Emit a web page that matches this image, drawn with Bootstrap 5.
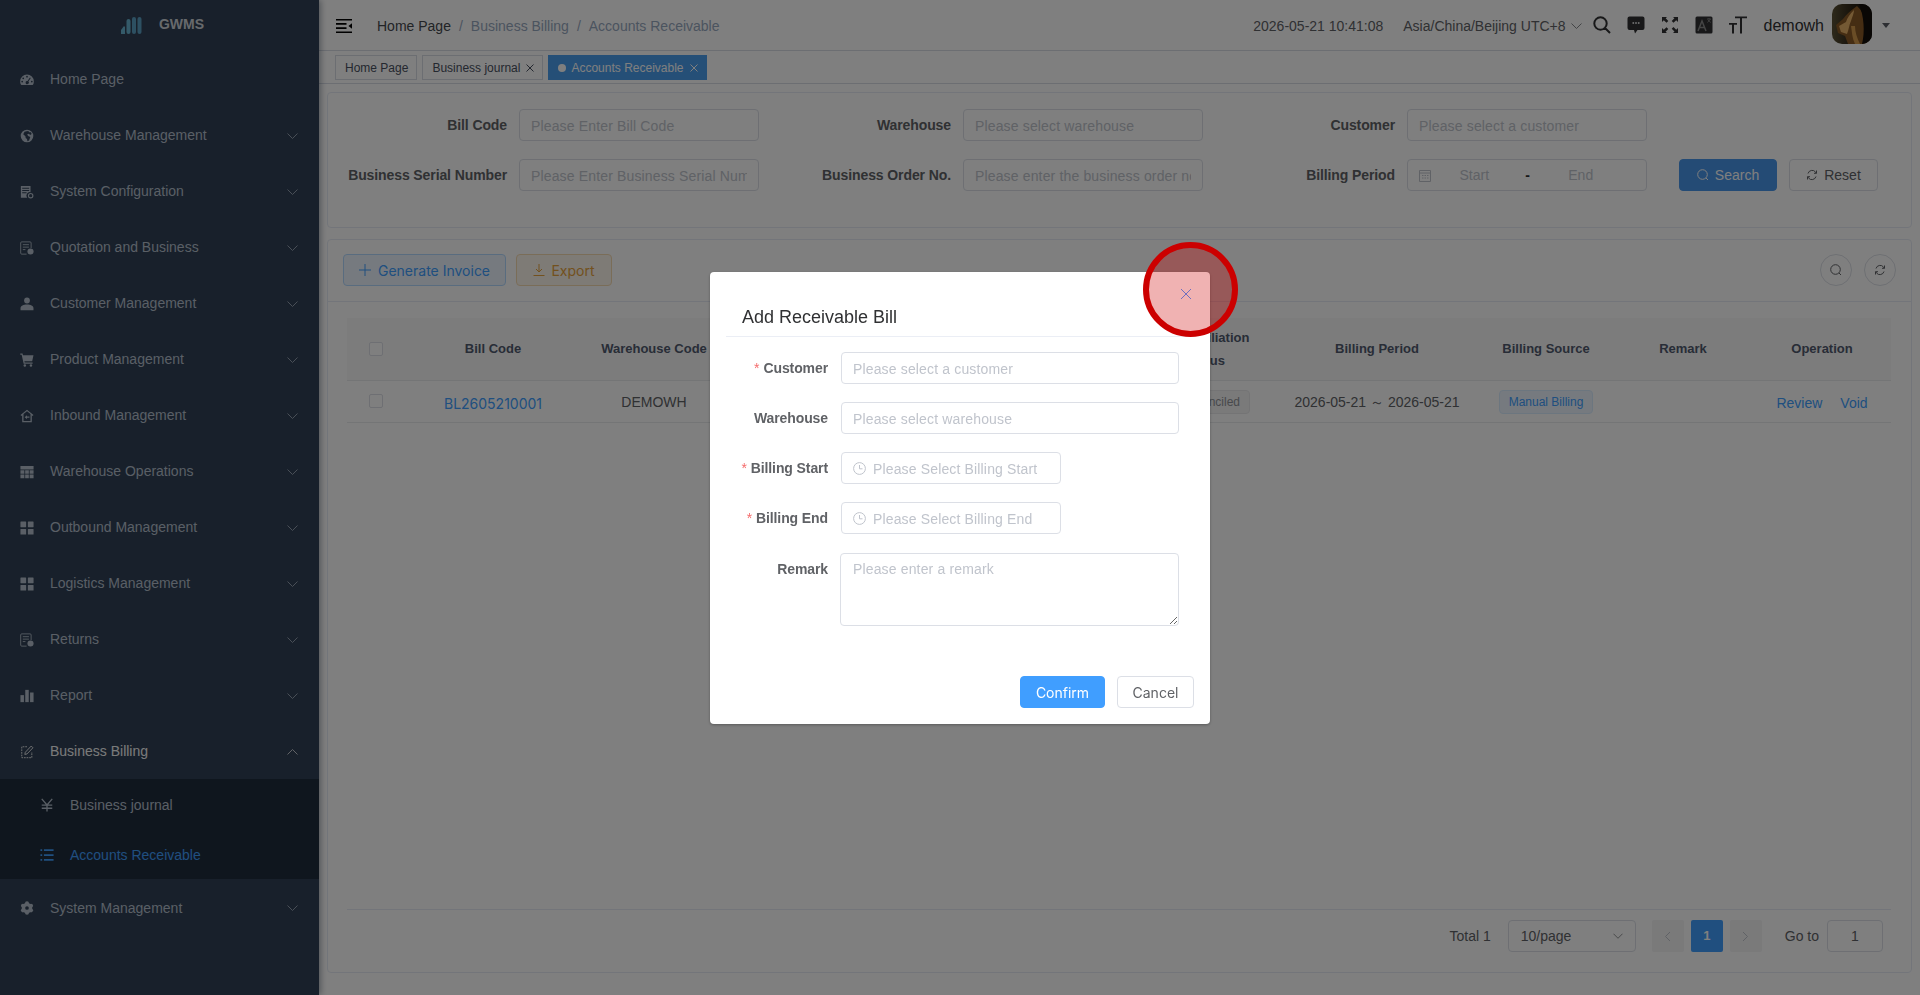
<!DOCTYPE html>
<html lang="en">
<head>
    <meta charset="UTF-8">
    <meta name="viewport" content="width=device-width, initial-scale=1.0">
    <title>GWMS - Accounts Receivable</title>
    <link href="https://cdn.jsdelivr.net/npm/bootstrap@5.3.0/dist/css/bootstrap.min.css" rel="stylesheet">
    <style>
        body { height: 100vh; overflow: hidden; font-family: "Liberation Sans", Arial, sans-serif; font-size: 14px; color: #606266; background: #fff; }
        .ic { width: 14px; height: 14px; fill: currentColor; flex: none; }
        .inter { font-family: Inter, "Liberation Sans", sans-serif; }

        /* sidebar */
        .side { width: 319px; flex: none; background: #304156; box-shadow: 2px 0 6px rgba(0, 21, 41, .35); position: relative; z-index: 2; color: #b4bfcc; }
        .side-logo { height: 51px; padding: 0 0 2px 5px; color: #cfd4da; font-size: 14px; font-weight: 600; gap: 17px; }
        .side-logo svg { width: 22px; height: 18px; }
        .side .nav-link { height: 56px; padding: 1px 21px 0 20px; gap: 16px; color: #b4bfcc; }
        .side .nav-link.open { color: #f4f4f5; }
        .side .sub { background: #1f2d3d; }
        .side .sub .nav-link { height: 50px; padding: 2px 21px 0 40px; }
        .side .sub .nav-link.active { color: #409eff; }
        .side .sub + .nav-link { padding-top: 2px; }
        .chev { width: 11px; height: 6px; margin-left: auto; fill: none; stroke: currentColor; stroke-width: 1; opacity: .75; }
        .chev.up { transform: rotate(180deg); }

        /* top bars */
        .topbar { height: 51px; border-bottom: 1px solid #d8dce5; padding: 2px 0 0 17px; }
        .hamb { width: 16px; height: 14px; fill: #000; margin-right: 25px; }
        .crumb { margin: 0; color: #97a8be; }
        .crumb .breadcrumb-item { line-height: 14px; height: 15px; overflow: hidden; }
        .crumb .breadcrumb-item + .breadcrumb-item { padding-left: 8px; }
        .crumb .breadcrumb-item + .breadcrumb-item::before { padding-right: 8px; color: #97a8be; }
        .crumb .first { color: #45484d; }
        .tools { gap: 16px; margin-top: -2px; }
        .tool { width: 18px; height: 18px; fill: #303133; }
        .avatar { width: 40px; height: 40px; border-radius: 10px; margin-top: -4px; }
        .caret-d { width: 0; height: 0; border: 4px solid transparent; border-top: 5px solid #5a5e66; border-bottom: 0; margin: -2px 30px 0 10px; }
        .tagbar { border-bottom: 1px solid #d8dce5; padding: 4px 0 0 16px; gap: 5px; box-sizing: content-box; height: 28px; }
        .vtag { height: 25px; padding: 0 8px 0 9px; border: 1px solid #d8dce5; color: #495060; font-size: 12px; gap: 6px; background: #fff; }
        .vtag svg { width: 8px; height: 8px; stroke: currentColor; stroke-width: 1; fill: none; }
        .vtag.on { background: #4a9eee; border-color: #4a9eee; color: #fff; }
        .vtag .dot { width: 8px; height: 8px; border-radius: 50%; background: #fff; margin-right: -1px; }

        /* cards */
        .wrap { padding: 8px 8px 22px; gap: 11px; flex: 1; min-height: 0; }
        .panel { border: 1px solid #e6ebf5; border-radius: 4px; background: #fff; }
        .filters { display: grid; grid-template-columns: 179px 240px 180px 240px 180px 240px auto; column-gap: 12px; row-gap: 18px; height: 136px; padding-top: 16px; align-content: start; align-items: center; }
        .filters label, .dlg-row label { font-weight: 700; color: #606266; text-align: right; letter-spacing: -.1px; padding-top: 1px; }
        .form-control { height: 32px; min-height: 32px; padding: 1px 11px 0; font-size: 14px; color: #606266; border: 1px solid #dcdfe6; border-radius: 4px; box-shadow: none; }
        .form-control::placeholder { color: #c0c4cc; opacity: 1; letter-spacing: .15px; }
        .range { height: 32px; border: 1px solid #dcdfe6; border-radius: 4px; color: #c0c4cc; padding: 0 22px 0 11px; }
        .range svg { width: 12px; height: 13px; fill: none; stroke: #c0c4cc; flex: none; }
        .range span { text-align: center; }
        .range .dash { color: #303133; width: 20px; font-weight: 700; flex: none; }
        .range .part { flex: 1 1 0; }
        .btn-el { height: 32px; padding: 0; font-size: 14px; border-radius: 4px; gap: 6px; display: inline-flex; align-items: center; justify-content: center; white-space: nowrap; }
        .btn-el svg { width: 12px; height: 12px; fill: none; stroke: currentColor; stroke-width: 1; }
        .btn-search { background: #4896ea; color: #fff; border: 1px solid #4896ea; width: 98px; }
        .btn-plain { background: #fff; color: #606266; border: 1px solid #dcdfe6; }
        .btn-blue { background: #ecf5ff; color: #409eff; border: 1px solid #b3d8ff; width: 163px; gap: 7px; }
        .btn-orange { background: #fdf6ec; color: #e6a23c; border: 1px solid #f5dab1; width: 96px; margin-left: 10px; }
        .btn-round { width: 32px; height: 32px; border-radius: 50%; padding: 0; color: #606266; }
        .toolbar { padding: 14px 15px 15px; border-bottom: 1px solid #e6ebf5; }

        /* table */
        .tbl-wrap { margin: 16px 20px 0 19px; }
        .table { table-layout: fixed; width: 1544px; margin: 0; font-size: 14px; color: #606266; }
        .table th { height: 62px; background: #f8f8f9; color: #515a6e; font-size: 13px; font-weight: 700; text-align: center; vertical-align: middle; line-height: 23px; padding: 0 8px; border-bottom: 1px solid #e8eaec; }
        .table td { height: 42px; text-align: center; vertical-align: middle; padding: 2px 8px 0; border-bottom: 1px solid #e8eaec; }
        .table th:first-child, .table td:first-child { padding: 0 8px; }
        .check { display: block; width: 14px; height: 14px; border: 1px solid #dcdfe6; border-radius: 2px; background: #fff; margin: 0 0 0 14px; }
        .lk { color: #409eff; text-decoration: none; display: inline-block; margin-top: 3px; }
        .void { margin-left: 18px; }
        .tg { display: inline-block; height: 24px; line-height: 22px; padding: 0 9px; font-size: 12px; border-radius: 4px; border: 1px solid; }
        .tg-gray { background: #f4f4f5; border-color: #e9e9eb; color: #909399; }
        .tg-blue { background: #ecf5ff; border-color: #d9ecff; color: #409eff; }

        /* pagination */
        .pager { margin: auto 20px 0 19px; height: 63px; border-top: 1px solid #e6ebf5; padding: 10px 8px 0 0; color: #606266; }
        .pager .sel { width: 128px; height: 32px; border: 1px solid #dcdfe6; border-radius: 4px; padding: 0 12px; margin: 0 16px 0 17px; }
        .pager .sel .chev { width: 10px; }
        .pager .lh { line-height: 32px; }
        .pager .pagination { gap: 8px; margin: 0 23px 0 0; }
        .pager .page-link { width: 32px; height: 32px; padding: 0; display: flex; align-items: center; justify-content: center; border: 0; border-radius: 2px !important; background: #f4f4f5; color: #c0c4cc; font-size: 13px; }
        .pager .active .page-link { background: #409eff; color: #fff; font-weight: 700; }
        .pager .page-link svg { width: 7px; height: 11px; fill: none; stroke: currentColor; }
        .pager .go { width: 56px; text-align: center; margin-left: 8px; padding: 0; border-color: #dcdfe6; }

        /* dialog */
        .modal-backdrop { background: #000; }
        .dlg.modal-dialog { width: 500px; max-width: 500px; margin: 272px auto 0; }
        .dlg .modal-content { height: 452px; border: 0; border-radius: 4px; box-shadow: 0 1px 3px rgba(0, 0, 0, .3); display: block; }
        .dlg .modal-header { height: 65px; margin: 0 16px; padding: 0 0 7px 16px; align-items: flex-end; border-bottom: 1px solid #ebeef5; border-radius: 0; }
        .dlg .modal-title { font-size: 18px; line-height: 24px; color: #303133; font-weight: 400; }
        .dlg-close { position: absolute; top: 16px; right: 18px; width: 12px; height: 12px; padding: 0; border: 0; background: none; display: flex; z-index: 2; }
        .dlg-close svg { width: 12px; height: 12px; stroke: #6f6fc0; fill: none; }
        .dlg-row { display: grid; grid-template-columns: 118px 338px; column-gap: 13px; height: 32px; align-items: center; margin-bottom: 18px; }
        .dlg-row label i { color: #f56c6c; font-style: normal; font-weight: 400; margin-right: 4px; }
        .dlg-body { padding: 15px 0 0 0; }
        .date-in { position: relative; width: 220px; }
        .date-in .form-control { padding-left: 31px; }
        .date-in svg { position: absolute; left: 12px; top: 10px; width: 13px; height: 13px; fill: none; stroke: #c0c4cc; }
        .dlg-row.area { height: 73px; align-items: start; margin: 19px 0 0; }
        .dlg-row.area label { padding-top: 6px; }
        .dlg-row.area textarea { height: 73px; width: 339px; margin-left: -1px; padding: 5px 12px; }
        .dlg-foot { gap: 12px; padding: 50px 16px 0 0; }
        .btn-confirm { background: #409eff; border: 1px solid #409eff; color: #fff; width: 85px; }
        .btn-cancel { background: #fff; border: 1px solid #dcdfe6; color: #606266; width: 77px; }
        .hint-ring { position: absolute; left: 433px; top: -30px; width: 95px; height: 95px; border: 6px solid #c00; border-radius: 50%; background: rgba(204, 0, 0, .3); pointer-events: none; }
    </style>
</head>
<body class="d-flex">
    <svg width="0" height="0" class="position-absolute">
        <symbol id="i-home" viewBox="0 0 16 16"><path fill-rule="evenodd" d="M8 1.8A7.8 7.8 0 0 0 .2 9.6c0 1.6.4 3 1.1 3.9a.8.8 0 0 0 .6.3h12.2a.8.8 0 0 0 .6-.3c.7-.9 1.100-2.300 1.100-3.900A7.800 7.800 0 0 0 8 1.800zM8 3.200a1 1 0 1 1 0 2 1 1 0 0 1 0-2zM3.700 5a1 1 0 1 1 0 2 1 1 0 0 1 0-2zM2.500 8.800a1 1 0 1 1 0 2 1 1 0 0 1 0-2zM13.500 8.800a1 1 0 1 1 0 2 1 1 0 0 1 0-2zM11.400 5.200l.9.600-2.700 4a1.800 1.800 0 1 1-1-.600z"/></symbol>
        <symbol id="i-globe" viewBox="0 0 16 16"><path fill-rule="evenodd" d="M8 .8a7.200 7.200 0 1 0 0 14.400A7.200 7.200 0 0 0 8 .8zM9.500 2.300l1 1.300 2 .2.800 2-1.700 1-1.400-1.300-2 .4 1 2.200 2.600 1-1.500 4-1.800.8-.5-2.600-1.500-1-.3-2-2.500-2.200 1.500-3 2.300-.6z"/></symbol>
        <symbol id="i-config" viewBox="0 0 16 16"><path fill-rule="evenodd" d="M1 1h11v7.200a4 4 0 0 0-3.900 6.300H1zM2.500 3v1.200h8V3zm0 2.600v1.200h8V5.600zm0 2.600v1.200h5V8.200z"/><circle cx="12.200" cy="12.200" r="2.500" fill="none" stroke="currentColor" stroke-width="1.300"/></symbol>
        <symbol id="i-quote" viewBox="0 0 16 16"><g fill="none" stroke="currentColor"><path d="M7.500 15H2a1.200 1.200 0 0 1-1.200-1.200V2.200A1.200 1.200 0 0 1 2 1h9.500a1.200 1.200 0 0 1 1.200 1.200V8"/><path d="M3.200 4.200h7M3.200 7h7M3.200 9.800h3"/></g><circle cx="12" cy="12" r="3.500"/></symbol>
        <symbol id="i-user" viewBox="0 0 16 16"><circle cx="8" cy="4" r="3.300"/><path d="M.6 15v-2.500c0-2.400 3.400-4 7.400-4s7.400 1.600 7.400 4V15z"/></symbol>
        <symbol id="i-cart" viewBox="0 0 16 16"><path d="M.3.500h2.600l.5 2h12l-1.500 6.800H5l.4 1.600h9v1.400H4.200L1.900 1.900H.3z"/><circle cx="5.500" cy="14.300" r="1.400"/><circle cx="12.500" cy="14.300" r="1.400"/></symbol>
        <symbol id="i-in" viewBox="0 0 16 16"><path d="M8 .8.600 6.900l.9 1L2.500 7v8h11V7l1 .9.900-1zM12 13.600H4V5.800l4-3.300 4 3.300z"/><path d="M5.300 9.300 8 7.200v1.400h2.800v1.500H8v1.400z"/></symbol>
        <symbol id="i-table" viewBox="0 0 16 16"><path fill-rule="evenodd" d="M.5 1h15v14H.5zM.5 5v.9h4.500V10H.5v.8h4.500V15h.9v-4.200h4.200V15h.9v-4.200h4.500V10h-4.500V5.900h4.500V5zM5.900 5.900h4.200V10H5.900z"/></symbol>
        <symbol id="i-grid" viewBox="0 0 16 16"><rect x=".5" y=".5" width="6.500" height="6.500" rx=".5"/><rect x="9" y=".5" width="6.500" height="6.500" rx=".5"/><rect x=".5" y="9" width="6.500" height="6.500" rx=".5"/><rect x="9" y="9" width="6.500" height="6.500" rx=".5"/></symbol>
        <symbol id="i-bars" viewBox="0 0 16 16"><rect x=".5" y="7" width="4" height="8"/><rect x="6" y="1" width="4" height="14"/><rect x="11.500" y="4" width="4" height="11"/></symbol>
        <symbol id="i-bill" viewBox="0 0 16 16"><g fill="none" stroke="currentColor"><path d="M8 2H2v12.500h11.500V8" stroke-dasharray="2 1"/><path d="m12.800 1.200 2 2-6.800 7-2.500.6.600-2.500z"/></g></symbol>
        <symbol id="i-yen" viewBox="0 0 16 16"><path fill="none" stroke="currentColor" stroke-width="1.500" d="M2 1l6 7 6-7M8 8v7.500M2 8.200h12M2 11.700h12"/></symbol>
        <symbol id="i-list" viewBox="0 0 16 16"><path d="M.5 1.500h2v2h-2zM4.500 1.500h11v2h-11zM.5 7h2v2h-2zM4.500 7h11v2h-11zM.5 12.500h2v2h-2zM4.500 12.500h11v2h-11z"/></symbol>
        <symbol id="i-gear" viewBox="0 0 16 16"><circle cx="8" cy="8" r="4" fill="none" stroke="currentColor" stroke-width="3.800"/><circle cx="8" cy="2.700" r="2.300"/><circle cx="8" cy="13.300" r="2.300"/><circle cx="3.400" cy="5.300" r="2.300"/><circle cx="12.600" cy="5.300" r="2.300"/><circle cx="3.400" cy="10.700" r="2.300"/><circle cx="12.600" cy="10.700" r="2.300"/></symbol>
        <symbol id="i-chev" viewBox="0 0 11 6"><path d="M.5.500 5.500 5.500 10.500.500"/></symbol>
        <symbol id="i-x" viewBox="0 0 12 12"><path d="M1 1l10 10M11 1 1 11"/></symbol>
        <symbol id="i-search" viewBox="0 0 12 12"><circle cx="5.500" cy="5.500" r="4.800"/><path d="m9 9 2 2"/></symbol>
        <symbol id="i-refresh" viewBox="0 0 12 12"><path d="M2 4.500A4.300 4.300 0 0 1 9.500 3l.9 1.200M10 7.500A4.300 4.300 0 0 1 2.500 9l-.9-1.200"/><path d="M10.500 1.500v2.800H8M1.500 10.500V7.700H4"/></symbol>
        <symbol id="i-clock" viewBox="0 0 13 13"><circle cx="6.500" cy="6.500" r="5.900"/><path d="M6.500 3v3.800h3"/></symbol>
    </svg>

    <aside class="side d-flex flex-column">
        <div class="side-logo d-flex align-items-center justify-content-center">
            <svg viewBox="0 0 22 18"><g fill="#69b4d2"><path d="M1 18v-4l3-4 1 1v7z"/><rect x="6.500" y="3" width="4" height="15" rx="2"/></g><g fill="#5aa0c4"><rect x="12" y="1" width="4" height="17" rx="2"/><rect x="17.500" y="1" width="4" height="17" rx="2"/></g></svg>
            <span>GWMS</span>
        </div>
        <nav class="nav flex-column">
            <a class="nav-link d-flex align-items-center" href="#"><svg class="ic"><use href="#i-home"/></svg>Home Page</a>
            <a class="nav-link d-flex align-items-center" href="#"><svg class="ic"><use href="#i-globe"/></svg>Warehouse Management<svg class="chev"><use href="#i-chev"/></svg></a>
            <a class="nav-link d-flex align-items-center" href="#"><svg class="ic"><use href="#i-config"/></svg>System Configuration<svg class="chev"><use href="#i-chev"/></svg></a>
            <a class="nav-link d-flex align-items-center" href="#"><svg class="ic"><use href="#i-quote"/></svg>Quotation and Business<svg class="chev"><use href="#i-chev"/></svg></a>
            <a class="nav-link d-flex align-items-center" href="#"><svg class="ic"><use href="#i-user"/></svg>Customer Management<svg class="chev"><use href="#i-chev"/></svg></a>
            <a class="nav-link d-flex align-items-center" href="#"><svg class="ic"><use href="#i-cart"/></svg>Product Management<svg class="chev"><use href="#i-chev"/></svg></a>
            <a class="nav-link d-flex align-items-center" href="#"><svg class="ic"><use href="#i-in"/></svg>Inbound Management<svg class="chev"><use href="#i-chev"/></svg></a>
            <a class="nav-link d-flex align-items-center" href="#"><svg class="ic"><use href="#i-table"/></svg>Warehouse Operations<svg class="chev"><use href="#i-chev"/></svg></a>
            <a class="nav-link d-flex align-items-center" href="#"><svg class="ic"><use href="#i-grid"/></svg>Outbound Management<svg class="chev"><use href="#i-chev"/></svg></a>
            <a class="nav-link d-flex align-items-center" href="#"><svg class="ic"><use href="#i-grid"/></svg>Logistics Management<svg class="chev"><use href="#i-chev"/></svg></a>
            <a class="nav-link d-flex align-items-center" href="#"><svg class="ic"><use href="#i-quote"/></svg>Returns<svg class="chev"><use href="#i-chev"/></svg></a>
            <a class="nav-link d-flex align-items-center" href="#"><svg class="ic"><use href="#i-bars"/></svg>Report<svg class="chev"><use href="#i-chev"/></svg></a>
            <a class="nav-link open d-flex align-items-center" href="#"><svg class="ic"><use href="#i-bill"/></svg>Business Billing<svg class="chev up"><use href="#i-chev"/></svg></a>
            <div class="sub">
                <a class="nav-link d-flex align-items-center" href="#"><svg class="ic"><use href="#i-yen"/></svg>Business journal</a>
                <a class="nav-link active d-flex align-items-center" href="#"><svg class="ic"><use href="#i-list"/></svg>Accounts Receivable</a>
            </div>
            <a class="nav-link d-flex align-items-center" href="#"><svg class="ic"><use href="#i-gear"/></svg>System Management<svg class="chev"><use href="#i-chev"/></svg></a>
        </nav>
    </aside>

    <main class="flex-grow-1 d-flex flex-column" style="min-width:0">
        <header class="topbar d-flex align-items-center">
            <svg class="hamb" viewBox="0 0 16 14"><path d="M0 0h16v1.600H0zM0 4.100h10.500v1.600H0zM0 8.300h10.500v1.600H0zM0 12.400h16V14H0zM16 4.200v5.600L12.400 7z"/></svg>
            <ol class="breadcrumb crumb">
                <li class="breadcrumb-item first">Home Page</li>
                <li class="breadcrumb-item">Business Billing</li>
                <li class="breadcrumb-item">Accounts Receivable</li>
            </ol>
            <div class="ms-auto d-flex align-items-center">
                <span style="margin-right:20px">2026-05-21 10:41:08</span>
                <span>Asia/China/Beijing UTC+8</span>
                <svg class="chev" style="margin:0 11px 0 5px"><use href="#i-chev"/></svg>
                <div class="tools d-flex align-items-center">
                    <svg class="tool" viewBox="0 0 18 18"><path fill="none" stroke="#303133" stroke-width="2" d="M7.500 1.300a6.200 6.200 0 1 0 0 12.400 6.200 6.200 0 0 0 0-12.400zM12 12l5 5"/></svg>
                    <svg class="tool" viewBox="0 0 18 18"><path fill-rule="evenodd" d="M2.500.5h13a2 2 0 0 1 2 2v9.500a2 2 0 0 1-2 2h-5l-2.500 3.500-1-3.500h-4.500a2 2 0 0 1-2-2V2.500a2 2 0 0 1 2-2zM5.500 6.200v1.600h1.600V6.200zm2.700 0v1.600h1.600V6.200zm2.700 0v1.600h1.600V6.200z"/></svg>
                    <svg class="tool" viewBox="0 0 18 18"><path d="M1 1h5L4.700 2.300 7.300 5 5.500 6.800 2.800 4.200 1 6zM17 1v5l-1.800-1.800-2.700 2.600-1.800-1.800 2.700-2.700L12 1zM1 17v-5l1.800 1.800 2.700-2.600 1.800 1.800-2.700 2.700L6 17zM17 17h-5l1.500-1.500-2.800-2.700 1.800-1.800 2.700 2.700L17 12z"/></svg>
                    <svg class="tool" viewBox="0 0 18 18"><rect x=".5" y=".5" width="17" height="17" rx="1.500"/><path fill="none" stroke="#8a8a8a" stroke-width="1.500" d="M3 15 7 5 11 15M4.500 11.500h5"/><path fill="none" stroke="#8a8a8a" stroke-width=".8" d="M12 3h4M14 2v1M12.500 6.500 15.500 3M12.800 3.800l3 2.700"/></svg>
                    <svg class="tool" viewBox="0 0 18 18"><path d="M6 .5h12v1.800h-5v15.200h-2V2.300H6zM0 7h8v1.800H5v8.700H3V8.800H0z"/></svg>
                </div>
                <span style="font-size:16px;color:#303133;margin:0 8px 0 17px">demowh</span>
                <svg class="avatar" viewBox="0 0 40 40">
                    <defs><linearGradient id="av" x1="0" y1="0" x2="1" y2="0"><stop offset="0" stop-color="#5c5236"/><stop offset=".5" stop-color="#2c2416"/><stop offset="1" stop-color="#0c0a08"/></linearGradient></defs>
                    <rect width="40" height="40" fill="url(#av)"/>
                    <path fill="#8a5a26" d="M25 2c-6 4-11 9-14 13l-7 6 2 8 7 3 3 8h20C36 26 34 10 25 2z"/>
                    <path fill="#e8b268" d="M22 6c-4 4-7 8-8 12l-7 4 2 6 6 2c2-5 2-9 4-13 1-4 3-7 3-11z"/>
                    <path fill="#d49a4c" d="M19 22c1 6 1 12 4 18h5c-3-6-5-12-5-18z"/>
                    <path fill="#120e0a" d="M27 0h13v40H30c3-12 2-28-3-40z"/>
                </svg>
                <span class="caret-d"></span>
            </div>
        </header>
        <div class="tagbar d-flex">
            <span class="vtag d-flex align-items-center">Home Page</span>
            <span class="vtag d-flex align-items-center">Business journal<svg viewBox="0 0 8 8"><path d="M.5.500l7 7M7.500.500l-7 7"/></svg></span>
            <span class="vtag on d-flex align-items-center"><span class="dot"></span>Accounts Receivable<svg viewBox="0 0 8 8"><path d="M.5.500l7 7M7.500.500l-7 7"/></svg></span>
        </div>

        <div class="wrap d-flex flex-column">
            <section class="panel filters">
                <label>Bill Code</label><input class="form-control" placeholder="Please Enter Bill Code">
                <label>Warehouse</label><input class="form-control" placeholder="Please select warehouse">
                <label>Customer</label><input class="form-control" placeholder="Please select a customer">
                <span></span>
                <label>Business Serial Number</label><input class="form-control" placeholder="Please Enter Business Serial Number">
                <label>Business Order No.</label><input class="form-control" placeholder="Please enter the business order no">
                <label>Billing Period</label>
                <div class="range d-flex align-items-center">
                    <svg viewBox="0 0 12 13"><path d="M.5 1.500h11v11H.5zM.5 4h11M3 6.500h1.500M5.500 6.500H7M8 6.500h1.500M3 9h1.500M5.500 9H7M8 9h1.500"/></svg>
                    <span class="part">Start</span><span class="dash">-</span><span class="part">End</span>
                </div>
                <div class="d-flex" style="gap:12px;margin-left:20px">
                    <button class="btn-el btn-search"><svg><use href="#i-search"/></svg>Search</button>
                    <button class="btn-el btn-plain" style="width:89px"><svg><use href="#i-refresh"/></svg>Reset</button>
                </div>
            </section>

            <section class="panel flex-grow-1 d-flex flex-column" style="min-height:0">
                <div class="toolbar d-flex align-items-center inter">
                    <button class="btn-el btn-blue"><svg viewBox="0 0 12 12"><path d="M6 0v12M0 6h12"/></svg>Generate Invoice</button>
                    <button class="btn-el btn-orange"><svg viewBox="0 0 12 12"><path d="M6 0v7.500M3 5l3 3 3-3M0.500 11.500h11"/></svg>Export</button>
                    <button class="btn-el btn-plain btn-round ms-auto"><svg><use href="#i-search"/></svg></button>
                    <button class="btn-el btn-plain btn-round" style="margin-left:12px"><svg><use href="#i-refresh"/></svg></button>
                </div>
                <div class="tbl-wrap">
                    <table class="table">
                        <colgroup><col style="width:58px"><col style="width:176px"><col style="width:146px"><col style="width:408px"><col style="width:140px"><col style="width:204px"><col style="width:134px"><col style="width:140px"><col style="width:138px"></colgroup>
                        <thead>
                            <tr>
                                <th><span class="check"></span></th>
                                <th>Bill Code</th>
                                <th>Warehouse Code</th>
                                <th></th>
                                <th>Reconciliation<br>Status</th>
                                <th>Billing Period</th>
                                <th>Billing Source</th>
                                <th>Remark</th>
                                <th>Operation</th>
                            </tr>
                        </thead>
                        <tbody>
                            <tr>
                                <td><span class="check"></span></td>
                                <td><a class="lk inter" href="#">BL2605210001</a></td>
                                <td>DEMOWH</td>
                                <td></td>
                                <td><span class="tg tg-gray">Unreconciled</span></td>
                                <td>2026-05-21 ～ 2026-05-21</td>
                                <td><span class="tg tg-blue">Manual Billing</span></td>
                                <td></td>
                                <td><a class="lk" href="#">Review</a><a class="lk void" href="#">Void</a></td>
                            </tr>
                        </tbody>
                    </table>
                </div>
                <div class="pager d-flex align-items-start justify-content-end">
                    <span class="lh">Total 1</span>
                    <div class="sel d-flex align-items-center">10/page<svg class="chev"><use href="#i-chev"/></svg></div>
                    <ul class="pagination">
                        <li class="page-item disabled"><a class="page-link" href="#"><svg viewBox="0 0 7 11"><path d="M6 1 1.500 5.500 6 10"/></svg></a></li>
                        <li class="page-item active"><a class="page-link" href="#">1</a></li>
                        <li class="page-item disabled"><a class="page-link" href="#"><svg viewBox="0 0 7 11"><path d="M1 1l4.500 4.500L1 10"/></svg></a></li>
                    </ul>
                    <span class="lh">Go to</span>
                    <input class="form-control go" value="1">
                </div>
            </section>
        </div>
    </main>

    <div class="modal-backdrop show"></div>
    <div class="modal d-block" tabindex="-1">
        <div class="modal-dialog dlg">
            <div class="modal-content">
                <div class="modal-header"><h5 class="modal-title">Add Receivable Bill</h5></div>
                <div class="dlg-body">
                    <div class="dlg-row"><label><i>*</i>Customer</label><input class="form-control" placeholder="Please select a customer"></div>
                    <div class="dlg-row"><label>Warehouse</label><input class="form-control" placeholder="Please select warehouse"></div>
                    <div class="dlg-row"><label><i>*</i>Billing Start</label><div class="date-in"><svg><use href="#i-clock"/></svg><input class="form-control" placeholder="Please Select Billing Start"></div></div>
                    <div class="dlg-row"><label><i>*</i>Billing End</label><div class="date-in"><svg><use href="#i-clock"/></svg><input class="form-control" placeholder="Please Select Billing End"></div></div>
                    <div class="dlg-row area"><label>Remark</label><textarea class="form-control" placeholder="Please enter a remark"></textarea></div>
                    <div class="dlg-foot d-flex justify-content-end inter">
                        <button class="btn-el btn-confirm">Confirm</button>
                        <button class="btn-el btn-cancel">Cancel</button>
                    </div>
                </div>
                <div class="hint-ring"></div>
                <button class="dlg-close" aria-label="Close"><svg><use href="#i-x"/></svg></button>
            </div>
        </div>
    </div>
</body>
</html>
